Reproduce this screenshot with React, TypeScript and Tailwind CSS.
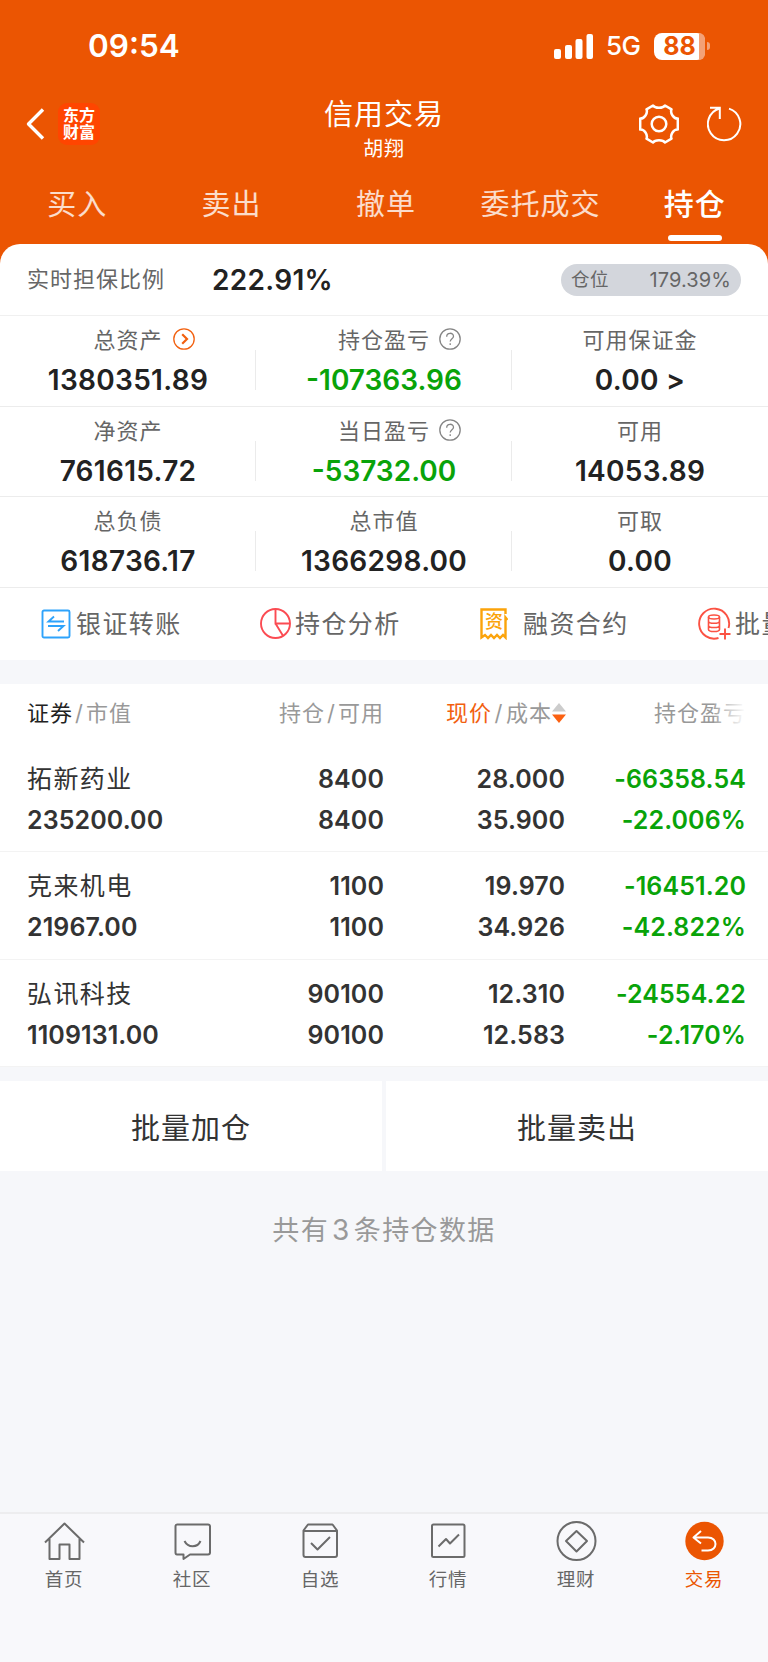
import { ReactNode } from 'react';

interface Metric {
  label: string;
  value: string;
  down?: boolean;
  icon?: 'arrow' | 'help';
}

interface Holding {
  name: string;
  marketValue: string;
  amount: string;
  available: string;
  price: string;
  cost: string;
  profit: string;
  rate: string;
}

const tabs = ['买入', '卖出', '撤单', '委托成交', '持仓'];

const metrics: Metric[][] = [
  [
    { label: '总资产', value: '1380351.89', icon: 'arrow' },
    { label: '持仓盈亏', value: '-107363.96', down: true, icon: 'help' },
    { label: '可用保证金', value: '0.00 >' },
  ],
  [
    { label: '净资产', value: '761615.72' },
    { label: '当日盈亏', value: '-53732.00', down: true, icon: 'help' },
    { label: '可用', value: '14053.89' },
  ],
  [
    { label: '总负债', value: '618736.17' },
    { label: '总市值', value: '1366298.00' },
    { label: '可取', value: '0.00' },
  ],
];

const holdings: Holding[] = [
  { name: '拓新药业', marketValue: '235200.00', amount: '8400', available: '8400', price: '28.000', cost: '35.900', profit: '-66358.54', rate: '-22.006%' },
  { name: '克来机电', marketValue: '21967.00', amount: '1100', available: '1100', price: '19.970', cost: '34.926', profit: '-16451.20', rate: '-42.822%' },
  { name: '弘讯科技', marketValue: '1109131.00', amount: '90100', available: '90100', price: '12.310', cost: '12.583', profit: '-24554.22', rate: '-2.170%' },
];

function StatusBar() {
  return (
    <div className="flex h-[92px] items-start justify-between pl-[88px] pr-[58px] pt-[26px]">
      <span className="text-[31.5px] font-semibold leading-[40px]">09:54</span>
      <div className="flex h-[40px] items-center">
        <svg width="40" height="25" viewBox="0 0 40 25" fill="#fff">
          <rect x="0" y="15" width="7" height="10" rx="2" />
          <rect x="11" y="11" width="7" height="14" rx="2" />
          <rect x="21.500" y="5" width="7" height="20" rx="2" />
          <rect x="32.500" y="0" width="6.500" height="25" rx="2" />
        </svg>
        <span className="ml-[12px] w-[48px] text-[26px] font-medium leading-[40px] tracking-[-0.5px]">5G</span>
        <div className="relative flex h-[27px] w-[51px] items-center justify-center rounded-[8px] bg-white">
          <div className="absolute right-0 top-0 h-full w-[6px] rounded-r-[8px] bg-[#f3a177]" />
          <span className="relative text-[25px] font-bold leading-[27px] text-[#eb5502]">88</span>
        </div>
        <div className="ml-[2px] h-[8px] w-[3px] rounded-r-full bg-[#f3a177]" />
      </div>
    </div>
  );
}

function TitleBar() {
  return (
    <div className="grid h-[78px] grid-cols-[1fr_auto_1fr] px-[26px]">
      <div className="flex h-[64px] items-center">
        <svg width="19" height="32" viewBox="0 0 19 32" fill="none" stroke="#fff" strokeWidth="3.400">
          <path d="M17 1.500 2.500 16 17 30.500" strokeLinejoin="round" />
        </svg>
        <div className="ml-[13px] flex h-[42px] w-[42px] flex-col items-center justify-center rounded-[9px] bg-[#ff4500] text-[16px] font-bold leading-[17.5px]">
          <span>东方</span>
          <span>财富</span>
        </div>
      </div>
      <div className="flex flex-col items-center">
        <h1 className="mt-[4px] text-[29px] font-normal leading-[38px] tracking-[1px]">信用交易</h1>
        <span className="mt-[1px] text-[20px] leading-[28px] tracking-[0.8px]">胡翔</span>
      </div>
      <div className="flex h-[64px] items-center justify-end gap-[28px]">
        <svg width="40" height="40" viewBox="0 0 40 40" fill="none" stroke="#fff" strokeWidth="2.500" strokeLinejoin="round">
          <path d="M14 1.500C16 4.500 24 4.500 26 1.500L32.500 5.300C31 9 34.500 15 38.800 14.500V25.500C34.500 25 31 31 32.500 34.700L26 38.500C24 35.500 16 35.500 14 38.500L7.500 34.700C9 31 5.500 25 1.200 25.500V14.500C5.500 15 9 9 7.500 5.300Z" />
          <circle cx="20" cy="20" r="7.300" />
        </svg>
        <svg width="35" height="36" viewBox="0 0 35 36" fill="none" stroke="#fff" strokeWidth="2">
          <path d="M22 2.600A16.200 16.200 0 1 1 12.500 2.500M3 1.800H12.800V13" />
        </svg>
      </div>
    </div>
  );
}

function MetricIcon({ type }: { type: 'arrow' | 'help' }) {
  if (type === 'arrow') {
    return (
      <svg className="absolute left-full top-[3px] ml-[10px]" width="22" height="22" viewBox="0 0 22 22" fill="none" stroke="#f2600f">
        <circle cx="11" cy="11" r="10.200" strokeWidth="1.300" />
        <path d="M9.200 6.200 14 11 9.200 15.800" strokeWidth="2.200" />
      </svg>
    );
  }
  return (
    <svg className="absolute left-full top-[3px] ml-[9px]" width="22" height="22" viewBox="0 0 22 22" fill="none" stroke="#858585" strokeWidth="1.300">
      <circle cx="11" cy="11" r="10.200" />
      <path d="M7.700 8.700C7.700 4.100 14.500 4.300 14.500 8.300C14.500 10.700 11.200 10.700 11.200 13.600M11.200 15.200V17" />
    </svg>
  );
}

function Summary() {
  return (
    <>
      <div className="flex h-[72px] items-center border-b border-[#f0f0f0] pl-[27px] pr-[27px]">
        <span className="text-[22px] tracking-[1px] text-[#666]">实时担保比例</span>
        <span className="ml-[47px] text-[28px] font-semibold tracking-[0.3px] text-[#222]">222.91%</span>
        <div className="ml-auto flex h-[32px] w-[180px] items-center justify-between rounded-full bg-[#d3d6dc] px-[10px] text-[#666]">
          <span className="text-[18.5px] tracking-[0.6px]">仓位</span>
          <span className="text-[20px] tracking-[0.1px]">179.39%</span>
        </div>
      </div>
      {metrics.map((row, i) => (
        <div key={i} className="grid h-[90.6px] grid-cols-3 border-b border-[#ececec]">
          {row.map((item, j) => (
            <div key={item.label} className="relative flex flex-col items-center pt-[9px]">
              <span className="relative text-[22px] leading-[30px] tracking-[1px] text-[#666]">
                {item.label}
                {item.icon && <MetricIcon type={item.icon} />}
              </span>
              <span className={`mt-[8px] text-[28px] font-semibold leading-[34px] ${item.down ? 'text-[#09a309]' : 'tracking-[0.3px] text-[#222]'}`}>
                {item.value}
              </span>
              {j < 2 && <div className="absolute right-0 top-[34px] h-[40px] w-px bg-[#ebebeb]" />}
            </div>
          ))}
        </div>
      ))}
    </>
  );
}

function Action({ icon, label, className }: { icon: ReactNode; label: string; className: string }) {
  return (
    <div className={`flex shrink-0 items-center ${className}`}>
      {icon}
      <span className="mt-[2px] whitespace-nowrap text-[25px] tracking-[1.4px] text-[#666]">{label}</span>
    </div>
  );
}

function Actions() {
  return (
    <div className="flex h-[72px] overflow-hidden pl-[41px]">
      <Action
        className="w-[219px] gap-[5px]"
        label="银证转账"
        icon={
          <svg width="30" height="30" viewBox="0 0 30 30" fill="none" stroke="#2ea3fb" strokeWidth="1.900">
            <rect x="1.500" y="1.500" width="27" height="27" rx="1.500" />
            <path d="M23 12.500H7.500L13 7.500M7 17H22.500L17 22" />
          </svg>
        }
      />
      <Action
        className="w-[220px] gap-[4px]"
        label="持仓分析"
        icon={
          <svg width="31" height="31" viewBox="0 0 31 31" fill="none" stroke="#fb4b52" strokeWidth="1.900">
            <circle cx="15.500" cy="15.500" r="14.500" />
            <path d="M15.500 1V15.500H30M15.500 15.500 23 27.800" />
          </svg>
        }
      />
      <Action
        className="w-[218px] gap-[15px]"
        label="融资合约"
        icon={
          <div className="relative flex h-[32px] w-[28px] items-center justify-center">
            <svg className="absolute inset-0" width="28" height="32" viewBox="0 0 28 32" fill="none" stroke="#fba30a" strokeWidth="2.400">
              <path d="M25.500 6V1.500H1.500V29.500L5 27L8 30L11 27L14 30L17 27L20 30L23 27L25.500 29.500V9.500L27.500 12" />
            </svg>
            <span className="relative -mt-[4px] text-[18px] font-medium leading-none text-[#fba30a]">资</span>
          </div>
        }
      />
      <Action
        className="gap-[4px]"
        label="批量加仓"
        icon={
          <svg width="33" height="33" viewBox="0 0 33 33" fill="none" stroke="#fb5243" strokeWidth="1.900">
            <path d="M20.500 31A15 15 0 1 1 30.500 21M27 21.500V32.500M21.500 27H32.500" />
            <ellipse cx="16" cy="10" rx="5.500" ry="2" strokeWidth="1.600" />
            <path d="M10.500 10V22.500C10.500 25.200 21.500 25.200 21.500 22.500V10M10.500 14.200C10.500 16.900 21.500 16.900 21.500 14.200M10.500 18.400C10.500 21.100 21.500 21.100 21.500 18.400" strokeWidth="1.600" />
          </svg>
        }
      />
    </div>
  );
}

function HoldingsTable() {
  return (
    <div className="bg-white">
      <div className="relative grid h-[61px] grid-cols-[201px_156px_182px_180px] items-center pb-[2px] pl-[27px] text-[22px] tracking-[1px] text-[#999]">
        <span><span className="text-[#222]">证券</span><span className="px-[2px]">/</span>市值</span>
        <span className="text-right">持仓<span className="px-[2px]">/</span>可用</span>
        <div className="flex items-center justify-end">
          <span><span className="text-[#f2600f]">现价</span><span className="px-[2.5px]">/</span>成本</span>
          <svg width="14" height="20" viewBox="0 0 14 20">
            <path d="M7 0 14 8.500H0Z" fill="#ccc" />
            <path d="M7 20 14 11.500H0Z" fill="#fb6112" />
          </svg>
        </div>
        <span className="text-right">持仓盈亏</span>
        <div className="absolute right-[22px] top-[12px] h-[38px] w-[32px] bg-gradient-to-r from-white/10 to-white" />
      </div>
      {holdings.map((item) => (
        <div
          key={item.name}
          className="grid h-[107.4px] grid-cols-[201px_156px_181px_181px] border-b border-[#f3f3f3] pl-[27px] pt-[14px] text-[25px] font-semibold leading-[41px] tracking-[0.1px] text-[#333]"
        >
          <div className="flex flex-col">
            <span className="text-[25px] font-normal tracking-[1.4px]">{item.name}</span>
            <span>{item.marketValue}</span>
          </div>
          <div className="flex flex-col text-right">
            <span>{item.amount}</span>
            <span>{item.available}</span>
          </div>
          <div className="flex flex-col text-right">
            <span>{item.price}</span>
            <span>{item.cost}</span>
          </div>
          <div className="flex flex-col text-right text-[#09a309]">
            <span>{item.profit}</span>
            <span>{item.rate}</span>
          </div>
        </div>
      ))}
    </div>
  );
}

const navItems: { label: string; icon: ReactNode }[] = [
  {
    label: '首页',
    icon: <path d="M1 20.500 20.500 1.500 40 20.500M5.500 17V37H15.500V22.500H25.500V37H35.500V17" />,
  },
  {
    label: '社区',
    icon: <path d="M5 2.500H36Q38 2.500 38 4.500V30.500Q38 32.500 36 32.500H18L11.500 37V32.500H5Q3.500 32.500 3.500 30.500V4.500Q3.500 2.500 5 2.500ZM12.500 19C16 26 25.500 26 28.500 19" />,
  },
  {
    label: '自选',
    icon: <path d="M3.500 8.500 8 2.500H32.500L37 8.500V33Q37 35 35 35H5.500Q3.500 35 3.500 33ZM4 9H36.500M11 21 17.500 27.500 30 15" />,
  },
  {
    label: '行情',
    icon: <path d="M5.500 2.500H35Q36.500 2.500 36.500 4V33.500Q36.500 35 35 35H5.500Q4 35 4 33.500V4Q4 2.500 5.500 2.500ZM10.500 24.500 18 17 22 21.500 31 12.500" />,
  },
  {
    label: '理财',
    icon: (
      <>
        <circle cx="20.500" cy="19" r="19" />
        <path d="M20.500 9 31 19 20.500 29.500 10 19Z" />
      </>
    ),
  },
  {
    label: '交易',
    icon: (
      <>
        <circle cx="20.500" cy="19" r="19.200" fill="#eb5502" stroke="none" />
        <path d="M17 9 9.500 15.500 17 21.500M9.500 15.500H24C34 15.500 34 28.500 24 28.500H17.500" stroke="#fff" />
      </>
    ),
  },
];

function BottomNav() {
  return (
    <nav className="grid h-[150px] grid-cols-6 border-t-2 border-[#ededef] bg-[#f8f8fb]">
      {navItems.map(({ label, icon }) => (
        <div key={label} className={`flex flex-col items-center pt-[8px] ${label === '交易' ? 'text-[#eb5502]' : 'text-[#666]'}`}>
          <svg className="overflow-visible" width="41" height="40" viewBox="0 0 41 40" fill="none" stroke="#6b6b6b" strokeWidth="2" strokeLinejoin="round">
            {icon}
          </svg>
          <span className="mt-[3px] text-[18.5px] leading-[28px] tracking-[0.8px]">{label}</span>
        </div>
      ))}
    </nav>
  );
}

export default function App() {
  return (
    <div className="flex h-[1662px] w-[768px] flex-col overflow-hidden bg-[#f6f7fa] font-['Inter','Noto_Sans_CJK_SC',sans-serif] font-normal">
      <header className="h-[244px] shrink-0 bg-[#eb5502] text-white">
        <StatusBar />
        <TitleBar />
        <div className="grid h-[74px] w-[772px] grid-cols-5">
          {tabs.map((tab) => (
            <div
              key={tab}
              className={`relative flex justify-center leading-[42px] ${tab === '持仓' ? 'pt-[13px] text-[30px] font-medium tracking-[1px]' : 'pt-[14px] text-[29px] tracking-[1px] text-white/80'}`}
            >
              {tab}
              {tab === '持仓' && <div className="absolute top-[65px] h-[6px] w-[54px] rounded-full bg-white" />}
            </div>
          ))}
        </div>
      </header>
      <div className="shrink-0 bg-[#eb5502]">
        <div className="rounded-t-[20px] bg-white">
          <Summary />
          <Actions />
        </div>
      </div>
      <div className="mt-[24px]">
        <HoldingsTable />
      </div>
      <div className="mt-[14px] grid h-[90px] grid-cols-2 gap-[4px] text-[29px] tracking-[1px] text-[#333]">
        <button className="bg-white pt-[5px]">批量加仓</button>
        <button className="bg-white pt-[5px]">批量卖出</button>
      </div>
      <p className="mt-[38px] text-center text-[27px] leading-[42px] tracking-[1.4px] text-[#999]">
        共有<span className="px-[3px] text-[28px]">3</span>条持仓数据
      </p>
      <div className="flex-1" />
      <BottomNav />
    </div>
  );
}
